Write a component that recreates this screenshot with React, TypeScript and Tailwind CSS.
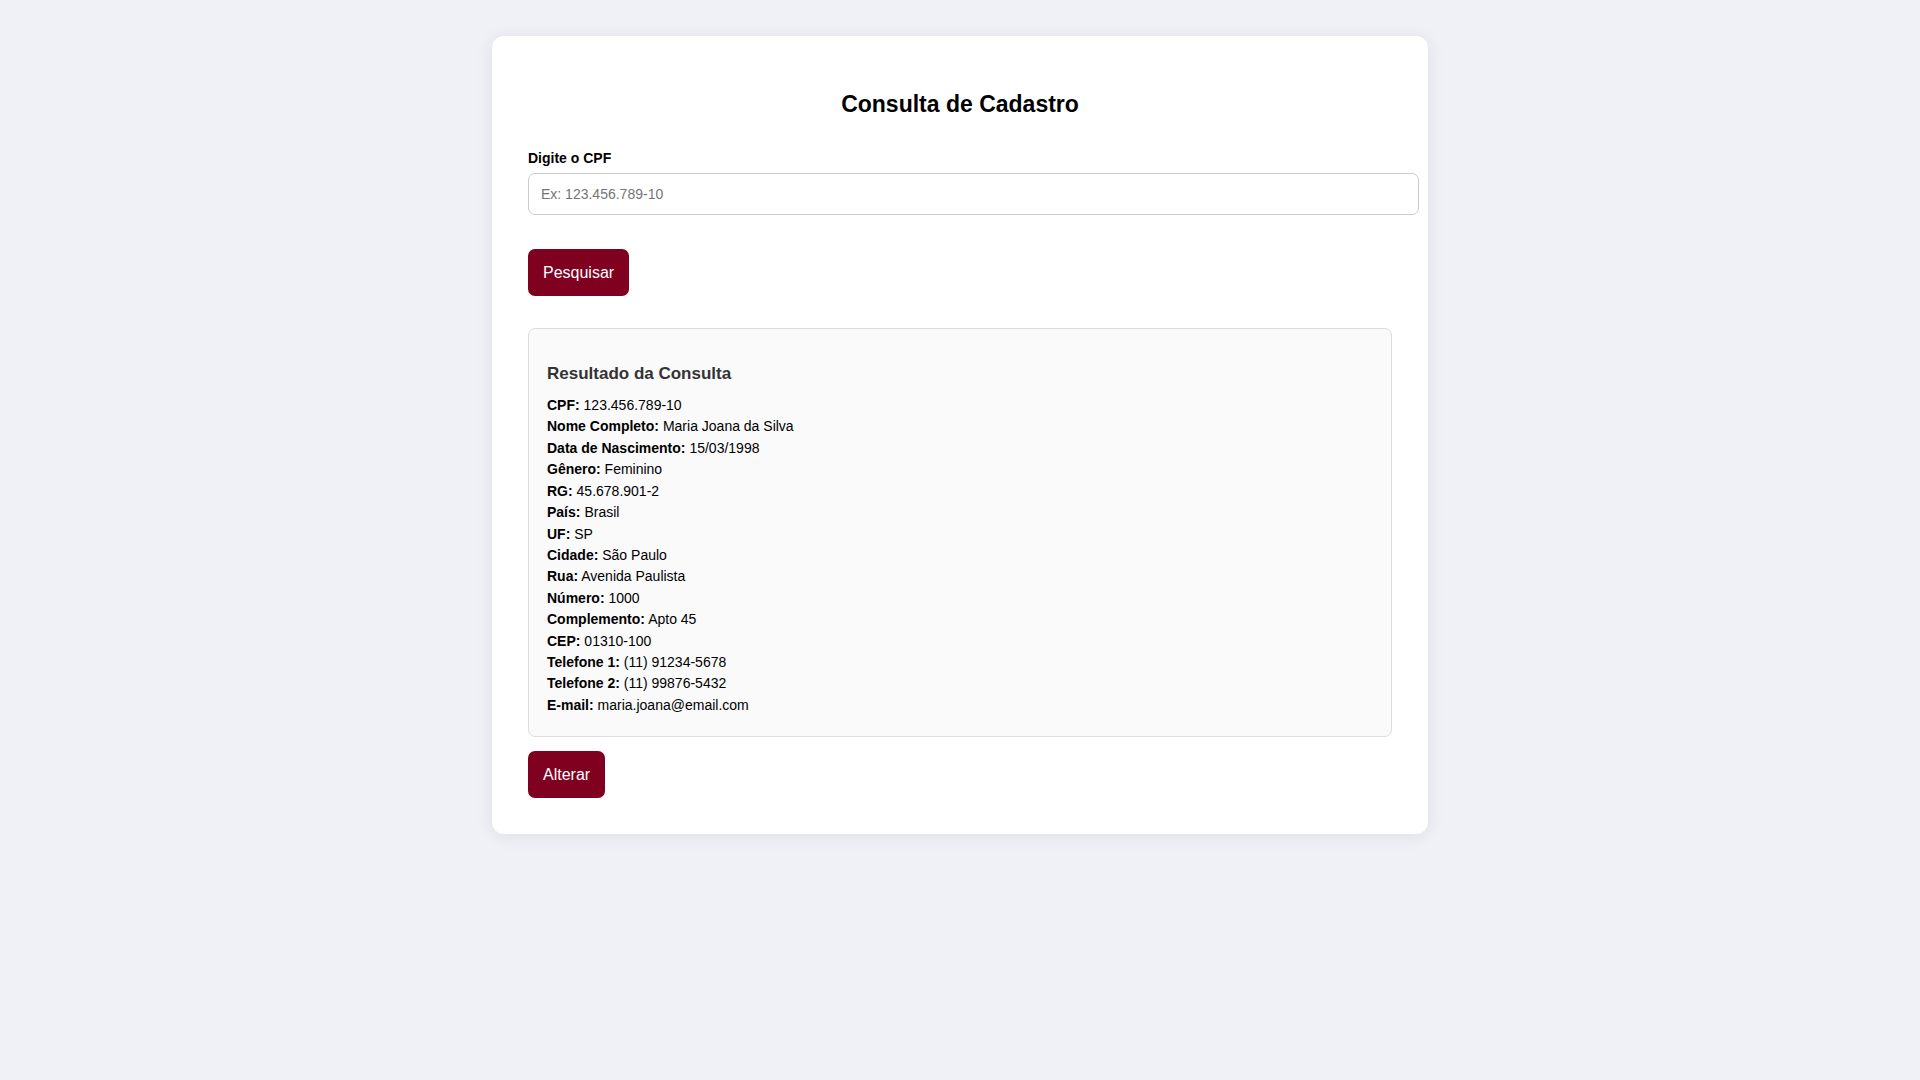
const fields: [string, string][] = [
  ["CPF", "123.456.789-10"],
  ["Nome Completo", "Maria Joana da Silva"],
  ["Data de Nascimento", "15/03/1998"],
  ["Gênero", "Feminino"],
  ["RG", "45.678.901-2"],
  ["País", "Brasil"],
  ["UF", "SP"],
  ["Cidade", "São Paulo"],
  ["Rua", "Avenida Paulista"],
  ["Número", "1000"],
  ["Complemento", "Apto 45"],
  ["CEP", "01310-100"],
  ["Telefone 1", "(11) 91234-5678"],
  ["Telefone 2", "(11) 99876-5432"],
  ["E-mail", "maria.joana@email.com"],
];

const buttonClass =
  "block cursor-pointer rounded-[7px] bg-[#800020] px-[15px] py-[14px] text-base leading-[19px] text-white hover:bg-[#660019]";

export default function App() {
  return (
    <div className="min-h-screen bg-[#f0f1f6] p-9 font-['Liberation_Sans',Arial,sans-serif] text-sm text-black">
      <main className="mx-auto max-w-[936px] rounded-xl bg-white p-9 shadow-[0_2px_18px_rgba(0,0,0,0.08)]">
        <h2 className="mt-[18px] mb-8 text-center text-[23px] leading-7 font-bold">Consulta de Cadastro</h2>
        <form onSubmit={(e) => e.preventDefault()}>
          <label htmlFor="cpf" className="mb-[7px] block leading-4 font-bold">
            Digite o CPF
          </label>
          <div className="-mr-[27px]">
            <input
              id="cpf"
              type="text"
              placeholder="Ex: 123.456.789-10"
              className="block w-full rounded-[7px] border border-[#cccccc] px-3 py-3 text-sm leading-4 placeholder:text-[#757575]"
            />
          </div>
          <button type="submit" className={`mt-[34px] ${buttonClass}`}>
            Pesquisar
          </button>
        </form>
        <section className="mt-8 rounded-[7px] border border-[#dddddd] bg-[#fafafa] px-[18px] pt-[18px] pb-5">
          <h3 className="mt-[17px] mb-[11px] text-[17px] leading-5 font-bold text-[#333333]">Resultado da Consulta</h3>
          <div className="grid min-h-[321px] content-between">
            {fields.map(([name, value]) => (
              <p key={name} className="leading-[21px]">
                <strong>{name}:</strong> {value}
              </p>
            ))}
          </div>
        </section>
        <button type="button" className={`mt-[14px] ${buttonClass}`}>
          Alterar
        </button>
      </main>
    </div>
  );
}
